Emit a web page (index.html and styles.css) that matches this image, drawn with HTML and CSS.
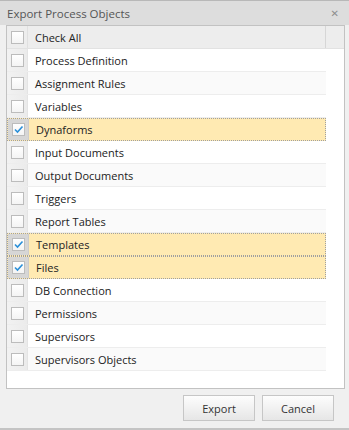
FILE: index.html
```html
<!DOCTYPE html>
<html>
<head>
<meta charset="utf-8">
<link rel="stylesheet" href="styles.css">
</head>
<body>
<div class="window">
  <div class="titlebar">
    <span class="title">Export Process Objects</span>
    <span class="close">&#x2715;</span>
  </div>
  <div class="panel">
    <div class="header">
      <div class="hrow">
        <div class="cbcell"><span class="cb"></span></div>
        <div class="label">Check All</div>
      </div>
      <div class="hgutter"></div>
    </div>
    <div class="body">
      <div class="rows">
        <div class="row"><div class="cbcell"><span class="cb"></span></div><div class="label">Process Definition</div></div>
        <div class="row alt"><div class="cbcell"><span class="cb"></span></div><div class="label">Assignment Rules</div></div>
        <div class="row"><div class="cbcell"><span class="cb"></span></div><div class="label">Variables</div></div>
        <div class="row sel"><div class="cbcell"><span class="cb on"><svg viewBox="0 0 13 13" width="13" height="13"><path d="M3 6.5 L5.5 9 L10.5 3.5" fill="none" stroke="#2a8fd8" stroke-width="1.6"/></svg></span></div><div class="label">Dynaforms</div></div>
        <div class="row"><div class="cbcell"><span class="cb"></span></div><div class="label">Input Documents</div></div>
        <div class="row alt"><div class="cbcell"><span class="cb"></span></div><div class="label">Output Documents</div></div>
        <div class="row"><div class="cbcell"><span class="cb"></span></div><div class="label">Triggers</div></div>
        <div class="row alt"><div class="cbcell"><span class="cb"></span></div><div class="label">Report Tables</div></div>
        <div class="row sel"><div class="cbcell"><span class="cb on"><svg viewBox="0 0 13 13" width="13" height="13"><path d="M3 6.5 L5.5 9 L10.5 3.5" fill="none" stroke="#2a8fd8" stroke-width="1.6"/></svg></span></div><div class="label">Templates</div></div>
        <div class="row sel"><div class="cbcell"><span class="cb on"><svg viewBox="0 0 13 13" width="13" height="13"><path d="M3 6.5 L5.5 9 L10.5 3.5" fill="none" stroke="#2a8fd8" stroke-width="1.6"/></svg></span></div><div class="label">Files</div></div>
        <div class="row"><div class="cbcell"><span class="cb"></span></div><div class="label">DB Connection</div></div>
        <div class="row alt"><div class="cbcell"><span class="cb"></span></div><div class="label">Permissions</div></div>
        <div class="row"><div class="cbcell"><span class="cb"></span></div><div class="label">Supervisors</div></div>
        <div class="row alt"><div class="cbcell"><span class="cb"></span></div><div class="label">Supervisors Objects</div></div>
      </div>
    </div>
  </div>
  <div class="footer">
    <button class="btn">Export</button>
    <button class="btn">Cancel</button>
  </div>
</div>
</body>
</html>
```

FILE: styles.css
```css
html, body {
  margin: 0;
  padding: 0;
  background: #f0f0f0;
}
.window {
  width: 349px;
  height: 430px;
  box-sizing: border-box;
  border-top: 1px solid #b8b8b8;
  border-bottom: 2px solid #c4c4c4;
  background: #f0f0f0;
  font-family: "Open Sans", "Liberation Sans", sans-serif;
  font-size: 11px;
  color: #222;
  display: flex;
  flex-direction: column;
}
.titlebar {
  height: 24px;
  background: #dddddd;
  display: flex;
  align-items: center;
  justify-content: space-between;
  padding: 0 10px 0 7px;
  flex: none;
}
.title {
  font-size: 11.5px;
  color: #555;
}
.close {
  font-size: 10px;
  color: #8e8e8e;
  font-weight: bold;
  font-family: "DejaVu Sans", sans-serif;
}
.panel {
  margin: 0 4px 0 6px;
  height: 364px;
  box-sizing: border-box;
  border: 1px solid #c2c2c2;
  background: #fff;
  display: flex;
  flex-direction: column;
}
.header {
  display: flex;
  height: 23px;
  background: #ededed;
  border-bottom: 1px solid #e2e2e2;
  box-sizing: border-box;
  flex: none;
}
.hrow {
  width: 319px;
  display: flex;
  border-right: 1px solid #d6d6d6;
  box-sizing: border-box;
}
.hgutter {
  flex: 1;
}
.body {
  flex: 1;
}
.rows {
  width: 319px;
}
.row {
  display: flex;
  height: 23px;
  box-sizing: border-box;
  border-bottom: 1px solid #ededed;
  background: #fff;
}
.row.alt {
  background: #fafafa;
}
.row.sel {
  background: #ffeab2;
  border: 1px dotted #a0a0a0;
}
.cbcell {
  width: 20px;
  flex: none;
  display: flex;
  align-items: center;
  justify-content: center;
  background: linear-gradient(to right, #f2f2f2, #ebebeb);
  border-right: 1px solid #e4e4e4;
}
.hrow .cbcell {
  background: transparent;
  border-right: 1px solid #e0e0e0;
}
.row.sel .cbcell {
  background: #d6d6d6;
  border-right-color: #cdcdcd;
}
.cb {
  width: 13px;
  height: 13px;
  box-sizing: border-box;
  border: 1px solid #bcbcbc;
  background: linear-gradient(#ffffff, #f4f4f4);
  display: block;
  position: relative;
}
.cb svg {
  position: absolute;
  left: -1px;
  top: -1px;
}
.label {
  padding-left: 7px;
  display: flex;
  align-items: center;
  white-space: nowrap;
}
.footer {
  flex: 1;
  display: flex;
  justify-content: flex-end;
  align-items: flex-start;
  gap: 7px;
  padding: 6px 15px 0 0;
}
.btn {
  width: 72px;
  height: 26px;
  border: 1px solid #c6c6c6;
  background: linear-gradient(#fdfdfd, #e6e6e6);
  font-family: "Open Sans", "Liberation Sans", sans-serif;
  font-size: 11px;
  color: #333;
  padding: 0;
}
```
